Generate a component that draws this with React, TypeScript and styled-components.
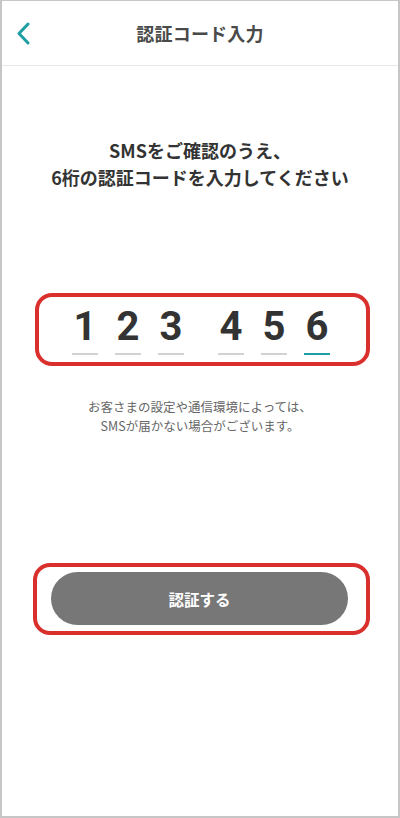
import styled, { createGlobalStyle } from "styled-components";

const COLOR = {
  frame: "#c6c6c6",
  divider: "#e6e6e6",
  teal: "#1f9ea4",
  text: "#333333",
  title: "#4a4a4a",
  sub: "#666666",
  line: "#d2d2d2",
  highlight: "#d9302d",
  button: "#777777",
};

const FONT = `"Noto Sans CJK JP", "Noto Sans", Roboto, sans-serif`;

const GlobalStyle = createGlobalStyle`
  html, body {
    margin: 0;
    padding: 0;
    background: #ffffff;
  }
  body {
    font-family: ${FONT};
  }
`;

const CODE = ["1", "2", "3", "4", "5", "6"];

const BackIcon = () => (
  <svg width="14" height="23" viewBox="0 0 14 23" fill="none">
    <path
      d="M12 2 L3 11.5 L12 21"
      stroke={COLOR.teal}
      strokeWidth="3"
      strokeLinecap="round"
      strokeLinejoin="round"
    />
  </svg>
);

const App = () => {
  return (
    <>
      <GlobalStyle />
      <Frame>
        <Header>
          <BackButton aria-label="戻る">
            <BackIcon />
          </BackButton>
          <Title>認証コード入力</Title>
          <span />
        </Header>

        <Lead>
          SMSをご確認のうえ、
          <br />
          6桁の認証コードを入力してください
        </Lead>

        <CodeBox>
          {CODE.map((digit, idx) => (
            <Cell key={idx} $gapBefore={idx === 3}>
              <Digit>{digit}</Digit>
              <Underline $active={idx === CODE.length - 1} />
            </Cell>
          ))}
        </CodeBox>

        <Note>
          お客さまの設定や通信環境によっては、
          <br />
          SMSが届かない場合がございます。
        </Note>

        <ButtonBox>
          <SubmitButton>認証する</SubmitButton>
        </ButtonBox>
      </Frame>
    </>
  );
};

const Frame = styled.div`
  width: 400px;
  height: 818px;
  box-sizing: border-box;
  border: 2px solid ${COLOR.frame};
  border-top-width: 1px;
  background: #ffffff;
  display: flex;
  flex-direction: column;
  overflow: hidden;
`;

const Header = styled.header`
  height: 64px;
  flex-shrink: 0;
  display: grid;
  grid-template-columns: 60px 1fr 60px;
  align-items: center;
  border-bottom: 1px solid ${COLOR.divider};
`;

const BackButton = styled.button`
  border: none;
  background: none;
  padding: 0 0 0 14px;
  display: flex;
  align-items: center;
  height: 100%;
  cursor: pointer;
`;

const Title = styled.h1`
  margin: 0;
  text-align: center;
  font-size: 18px;
  font-weight: 700;
  color: ${COLOR.title};
  letter-spacing: 0.2px;
`;

const Lead = styled.p`
  margin: 71px 0 0;
  text-align: center;
  font-size: 18px;
  line-height: 27px;
  font-weight: 700;
  color: ${COLOR.text};
`;

const CodeBox = styled.div`
  margin: 102px 0 0 33px;
  width: 335px;
  height: 73px;
  box-sizing: border-box;
  border: 4px solid ${COLOR.highlight};
  border-radius: 17px;
  padding: 10px 0 0 33px;
  display: flex;
  gap: 17px;
`;

const Cell = styled.div<{ $gapBefore?: boolean }>`
  width: 26px;
  display: flex;
  flex-direction: column;
  align-items: center;
  margin-left: ${(p) => (p.$gapBefore ? "17px" : "0")};
`;

const Digit = styled.span`
  font-family: Roboto, "Liberation Sans", sans-serif;
  font-size: 40px;
  line-height: 40px;
  font-weight: 700;
  color: ${COLOR.text};
`;

const Underline = styled.span<{ $active?: boolean }>`
  display: block;
  width: 26px;
  height: 2px;
  margin-top: 6px;
  background: ${(p) => (p.$active ? COLOR.teal : COLOR.line)};
`;

const Note = styled.p`
  margin: 31px 0 0;
  text-align: center;
  font-size: 12.5px;
  line-height: 19px;
  color: ${COLOR.sub};
`;

const ButtonBox = styled.div`
  margin: 128px 0 0 31px;
  width: 337px;
  height: 72px;
  box-sizing: border-box;
  border: 4px solid ${COLOR.highlight};
  border-radius: 17px;
  padding: 5px 0 0 14px;
`;

const SubmitButton = styled.button`
  width: 297px;
  height: 53px;
  border: none;
  border-radius: 27px;
  background: ${COLOR.button};
  color: #ffffff;
  font-family: ${FONT};
  font-size: 15.5px;
  font-weight: 700;
  cursor: pointer;
`;

export default App;
